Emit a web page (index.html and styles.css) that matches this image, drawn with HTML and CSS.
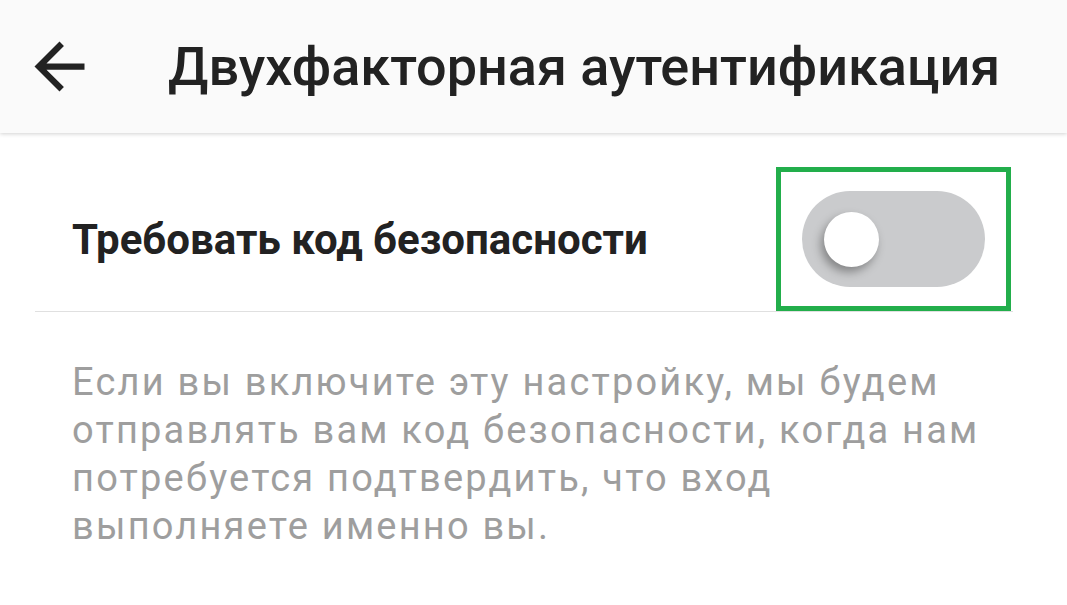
FILE: index.html
```html
<!DOCTYPE html>
<html lang="ru">
<head>
  <meta charset="UTF-8" />
  <title>Двухфакторная аутентификация</title>
  <meta name="viewport" content="width=device-width, initial-scale=1" />
  <link rel="stylesheet" href="styles.css">
</head>
<body>

<!-- Верхняя панель -->
<header class="topbar">
  <button class="back-btn" aria-label="Назад">
    <svg viewBox="0 0 24 24" width="75" height="75">
      <path d="M20 11H7.83l5.59-5.59L12 4l-8 8 8 8 1.41-1.41L7.83 13H20v-2z" fill="#222" />
    </svg>
  </button>
  <h1 class="title">Двухфакторная аутентификация</h1>
</header>

<main>
  <div class="setting-row">
    <span class="setting-label">Требовать код безопасности</span>
    <div class="toggle-frame">
      <div class="toggle">
        <div class="toggle-thumb"></div>
      </div>
    </div>
  </div>

  <p class="setting-desc">
    Если вы включите эту настройку, мы будем отправлять вам код безопасности, когда нам потребуется подтвердить, что вход выполняете именно вы.
  </p>
</main>

</body>
</html>
```

FILE: styles.css
```css
* {
  box-sizing: border-box;
  font-family: Roboto, 'Noto Sans', sans-serif;
}
body {
  margin: 0;
  background: #fff;
}
.topbar {
  height: 133px;
  background: #fafafa;
  display: flex;
  align-items: center;
  box-shadow: 0 1px 4px rgba(0, 0, 0, 0.18);
  position: relative;
}
.back-btn {
  border: none;
  background: none;
  padding: 0;
  margin-left: 22px;
  display: flex;
}
.title {
  margin: 0 0 0 71px;
  font-size: 54px;
  font-weight: 500;
  color: #222;
}
.setting-row {
  margin: 0 54px 0 35px;
  padding-top: 34px;
  display: flex;
  align-items: center;
  justify-content: space-between;
  border-bottom: 1px solid #e0e0e0;
}
.setting-label {
  padding-left: 37px;
  font-size: 42px;
  font-weight: 700;
  color: #222;
}
.toggle-frame {
  width: 235px;
  height: 144px;
  margin-right: 2px;
  border: 5px solid #22ae4b;
  display: flex;
  align-items: center;
  justify-content: center;
}
.toggle {
  width: 183px;
  height: 96px;
  border-radius: 48px;
  background: #cacbcd;
  display: flex;
  align-items: center;
  padding-left: 22px;
}
.toggle-thumb {
  width: 55px;
  height: 55px;
  border-radius: 50%;
  background: #fff;
  box-shadow: -3px 5px 10px rgba(0, 0, 0, 0.35);
}
.setting-desc {
  margin: 46px 0 0;
  padding: 0 64px 0 72px;
  font-size: 38px;
  line-height: 48px;
  letter-spacing: 2.2px;
  color: #9e9e9e;
}
```
